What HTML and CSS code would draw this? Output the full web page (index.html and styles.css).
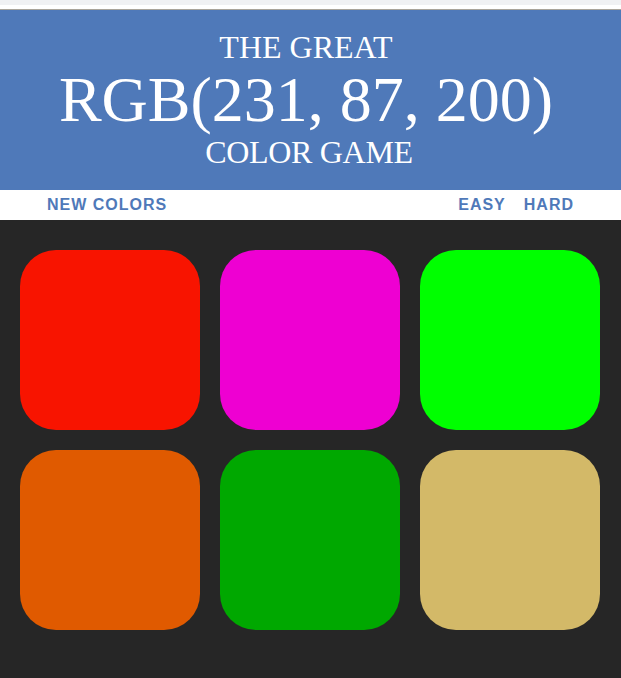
FILE: index.html
```html
<!DOCTYPE html>
<html lang="en">
<head>
<meta charset="utf-8">
<title>Color Game</title>
<link rel="stylesheet" href="styles.css">
</head>
<body>
<div class="topbar"></div>
<h1 class="title">
  <span class="title-line">The Great</span>
  <span class="title-rgb">RGB(231, 87, 200)</span>
  <span class="title-line title-last">Color Game</span>
</h1>
<nav class="stripe">
  <button class="btn">New Colors</button>
  <div class="modes">
    <button class="btn">Easy</button>
    <button class="btn">Hard</button>
  </div>
</nav>
<main class="board">
  <div class="grid">
    <div class="square sq-red"></div>
    <div class="square sq-magenta"></div>
    <div class="square sq-lime"></div>
    <div class="square sq-orange"></div>
    <div class="square sq-green"></div>
    <div class="square sq-tan"></div>
  </div>
</main>
</body>
</html>
```

FILE: styles.css
```css
html, body {
  margin: 0;
  padding: 0;
  background: #262626;
  height: 100%;
}
body {
  display: flex;
  flex-direction: column;
}
.topbar {
  height: 5px;
  background: #f0f1f3;
  border-bottom: 4px solid #ffffff;
  box-shadow: 0 1px 0 #a9a49a;
  margin-bottom: 1px;
}
.title {
  margin: 0;
  padding: 20px 0;
  height: 180px;
  box-sizing: border-box;
  background: #4f79b9;
  color: #ffffff;
  font-family: "Liberation Serif", "Times New Roman", serif;
  font-weight: normal;
  font-size: 32px;
  line-height: 35px;
  text-align: center;
  text-transform: uppercase;
  display: flex;
  flex-direction: column;
}
.title-line {
  display: block;
  padding-right: 9px;
}
.title-last {
  padding-right: 3px;
  letter-spacing: -0.3px;
}
.title-rgb {
  display: block;
  font-size: 64px;
  line-height: 70px;
  padding-right: 9px;
}
.stripe {
  background: #ffffff;
  height: 30px;
  flex: none;
  display: flex;
  align-items: center;
  justify-content: space-between;
  padding: 0 41px 0 41px;
}
.modes {
  display: flex;
  gap: 6px;
}
.btn {
  border: none;
  background: none;
  padding: 0 6px;
  margin: 0;
  height: 30px;
  font-family: "Liberation Sans", Arial, sans-serif;
  font-weight: 700;
  font-size: 16px;
  letter-spacing: 1px;
  text-transform: uppercase;
  color: #4f79b9;
  cursor: pointer;
}
.board {
  flex: 1;
  background: #262626;
}
.grid {
  width: 600px;
  margin: 20px 0 20px 10px;
  display: grid;
  grid-template-columns: repeat(3, 180px);
  gap: 20px;
  padding: 10px;
  box-sizing: border-box;
}
.square {
  width: 180px;
  height: 180px;
  border-radius: 36px;
}
.sq-red { background: #f81400; }
.sq-magenta { background: #ee00d2; }
.sq-lime { background: #00ff00; }
.sq-orange { background: #e05a00; }
.sq-green { background: #00a800; }
.sq-tan { background: #d3b968; }
```
